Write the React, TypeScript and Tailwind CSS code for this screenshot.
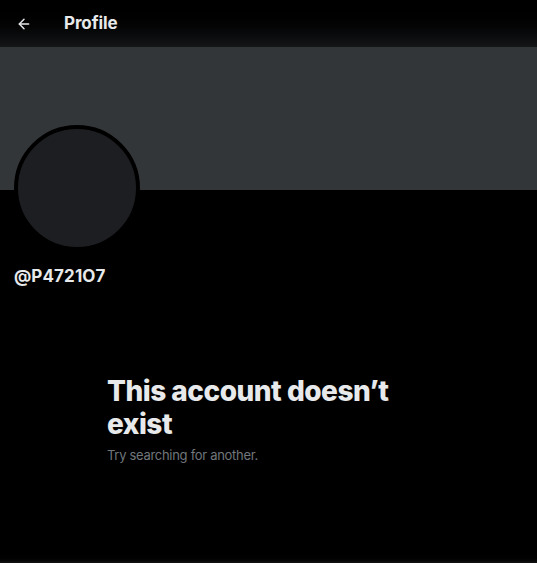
import React from 'react';
import { ArrowLeft } from 'lucide-react';

export default function App() {
  return (
    <div className="h-[563px] w-[537px] bg-black flex flex-col overflow-hidden font-['Inter',sans-serif] text-[#e7e9ea]">
      {/* Header */}
      <div className="h-[47px] shrink-0 flex items-center bg-gradient-to-b from-black to-[#151618]">
        <button className="w-[46px] flex justify-center pl-[1px]">
          <ArrowLeft className="w-[16px] h-[16px] text-[#e7e9ea]" strokeWidth={2.2} />
        </button>
        <h1 className="ml-[18px] text-[17px] font-bold tracking-[-0.1px]">Profile</h1>
      </div>

      {/* Banner */}
      <div className="h-[143px] shrink-0 bg-[#333639]" />

      {/* Avatar + handle */}
      <div className="px-[14px]">
        <div className="-mt-[65px] w-[126px] h-[126px] rounded-full border-[4px] border-black bg-[#1c1e21]" />
        <p className="mt-[15px] text-[17px] font-bold leading-[20px] tracking-[0.1px]">@P4721O7</p>
      </div>

      {/* Empty state */}
      <div className="flex-1 flex flex-col">
        <div className="w-[323px] mt-[89px] ml-[107px]">
          <h2 className="text-[28px] font-extrabold leading-[33px] tracking-[-0.5px]">This account doesn’t exist</h2>
          <p className="mt-[6px] text-[13px] leading-[16px] tracking-[-0.3px] text-[#71767b]">Try searching for another.</p>
        </div>
      </div>

      <div className="h-[8px] shrink-0 bg-gradient-to-b from-black to-[#121212]" />
    </div>
  );
}
